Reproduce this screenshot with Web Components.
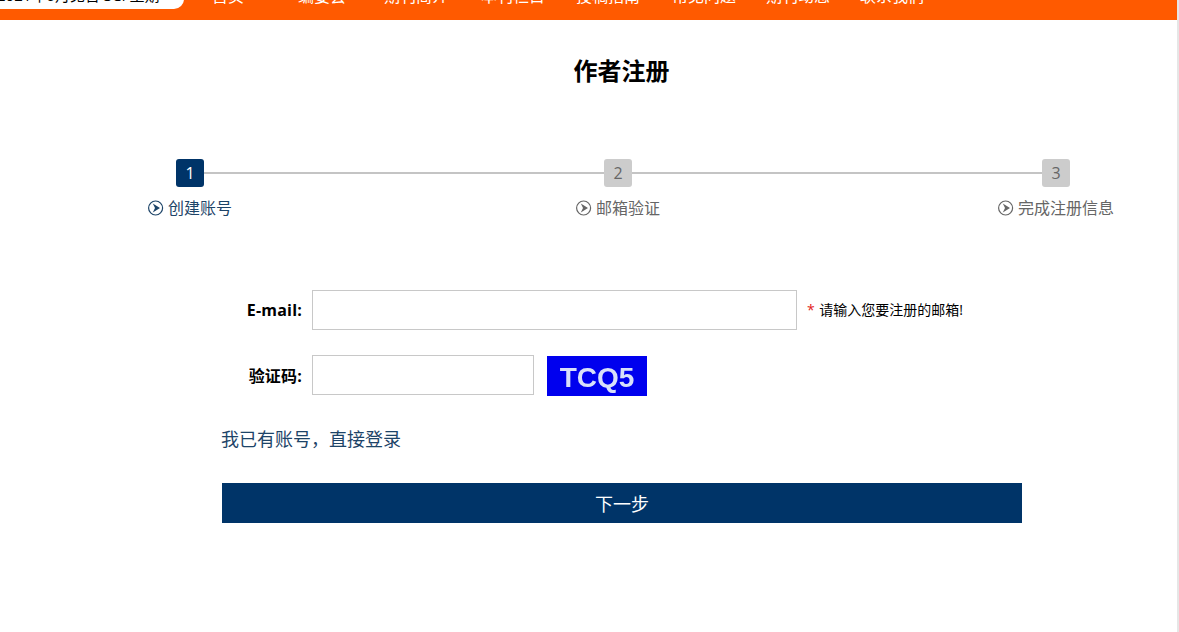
<!DOCTYPE html>
<html>
<head>
<meta charset="utf-8">
<style>
  html, body {
    margin: 0;
    height: 632px;
    overflow: hidden;
    background: #fff;
    font-family: "Open Sans", "Noto Sans CJK SC", sans-serif;
  }
  body { border-right: 2px solid #e6e6e6; box-sizing: border-box; }
</style>
</head>
<body>
<site-header>
  <nav-link>首页</nav-link>
  <nav-link style="margin-left:54px">编委会</nav-link>
  <nav-link style="margin-left:38px">期刊简介</nav-link>
  <nav-link style="margin-left:33px">本刊栏目</nav-link>
  <nav-link style="margin-left:31px">投稿指南</nav-link>
  <nav-link style="margin-left:32px">常见问题</nav-link>
  <nav-link style="margin-left:30px">期刊动态</nav-link>
  <nav-link style="margin-left:30px">联系我们</nav-link>
</site-header>
<register-page></register-page>

<script>
const arrowIcon = `
  <svg width="16" height="16" viewBox="0 0 16 16" aria-hidden="true">
    <circle cx="7.6" cy="8" r="7" fill="none" stroke="currentColor" stroke-width="1.2"/>
    <path d="M4.8 3.6 12 8l-7.2 4.4L7 8z" fill="currentColor"/>
  </svg>`;

class SiteHeader extends HTMLElement {
  constructor() {
    super();
    this.attachShadow({ mode: 'open' }).innerHTML = `
      <style>
        :host {
          display: flex;
          align-items: flex-end;
          height: 20px;
          background: #ff5a00;
          overflow: hidden;
        }
        .search {
          flex: none;
          width: 184px;
          height: 30px;
          margin-bottom: 11px;
          background: #fff;
          border-radius: 0 0 10px 0;
          color: #000;
          font-size: 15px;
          line-height: 33px;
          white-space: nowrap;
          overflow: hidden;
          text-indent: -3px;
        }
        .links {
          display: flex;
          margin-left: 28px;
          margin-bottom: 14px;
        }
      </style>
      <div class="search">2021年6月见台 SCI 主期</div>
      <div class="links"><slot></slot></div>
    `;
  }
}

class NavLink extends HTMLElement {
  constructor() {
    super();
    this.attachShadow({ mode: 'open' }).innerHTML = `
      <style>
        :host {
          display: block;
          color: #fff;
          font-size: 16px;
          line-height: 20px;
          white-space: nowrap;
        }
      </style>
      <slot></slot>
    `;
  }
}

class StepItem extends HTMLElement {
  constructor() {
    super();
    const active = this.hasAttribute('active');
    this.attachShadow({ mode: 'open' }).innerHTML = `
      <style>
        :host { display: block; }
        .num {
          width: 28px;
          height: 28px;
          margin-left: ${this.getAttribute('offset')}px;
          border-radius: 3px;
          background: ${active ? '#003468' : '#cccccc'};
          color: ${active ? '#fff' : '#666'};
          font-size: 16px;
          line-height: 28px;
          text-align: center;
        }
        .label {
          display: flex;
          align-items: center;
          gap: 4px;
          margin-top: 10px;
          color: ${active ? '#1d4468' : '#666'};
          font-size: 16px;
          line-height: 22px;
          white-space: nowrap;
        }
        svg { flex: none; }
      </style>
      <div class="num">${this.getAttribute('num')}</div>
      <div class="label">${arrowIcon}<slot></slot></div>
    `;
  }
}

class FormRow extends HTMLElement {
  constructor() {
    super();
    this.attachShadow({ mode: 'open' }).innerHTML = `
      <style>
        :host {
          display: flex;
          align-items: center;
          height: 40px;
          color: #000;
          font-size: 16px;
        }
        label {
          width: 302px;
          text-align: right;
          font-weight: 700;
          letter-spacing: .2px;
          margin-right: 10px;
          white-space: nowrap;
        }
      </style>
      <label>${this.getAttribute('label')}</label>
      <slot></slot>
    `;
  }
}

class CaptchaImage extends HTMLElement {
  constructor() {
    super();
    this.attachShadow({ mode: 'open' }).innerHTML = `
      <style>
        :host {
          display: block;
          width: 100px;
          height: 40px;
          margin: 1px 0 0 13px;
          background: #0000ee;
          color: #d8dffa;
          font: 700 28px/44px "Liberation Sans", sans-serif;
          text-align: center;
          overflow: hidden;
        }
        span { display: block; filter: blur(.7px); }
      </style>
      <span><slot></slot></span>
    `;
  }
}

class RegisterPage extends HTMLElement {
  constructor() {
    super();
    this.attachShadow({ mode: 'open' }).innerHTML = `
      <style>
        :host { display: block; }
        h1 {
          margin: 36px 0 0;
          padding-left: 66px;
          text-align: center;
          color: #000;
          font-size: 24px;
          line-height: 30px;
          font-weight: 700;
        }
        .steps {
          position: relative;
          display: flex;
          margin-top: 73px;
          height: 62px;
        }
        .track {
          position: absolute;
          left: 204px;
          width: 838px;
          top: 13px;
          height: 2px;
          background: #c4c4c4;
        }
        .s1 { position: absolute; left: 148px; }
        .s2 { position: absolute; left: 576px; }
        .s3 { position: absolute; left: 998px; }
        .form { margin-top: 69px; }
        input {
          box-sizing: border-box;
          height: 40px;
          border: 1px solid #c8c8c8;
          padding: 0 8px;
          outline: none;
          background: #fff;
        }
        .email { width: 485px; }
        .code { width: 222px; }
        .hint {
          margin: 0 0 3px 10px;
          font-size: 14px;
          white-space: nowrap;
        }
        .hint b { color: #e2231a; font-weight: 400; margin-right: 1px; }
        form-row + form-row { margin-top: 25px; }
        .login {
          display: block;
          margin: 24px 0 0 221px;
          color: #1d4468;
          font-size: 18px;
          line-height: 40px;
          text-decoration: none;
        }
        button {
          display: block;
          width: 800px;
          height: 40px;
          margin: 24px 0 0 222px;
          border: 0;
          background: #003468;
          color: #fff;
          font: inherit;
          font-size: 18px;
        }
      </style>
      <h1>作者注册</h1>
      <div class="steps">
        <div class="track"></div>
        <step-item class="s1" num="1" offset="28" active>创建账号</step-item>
        <step-item class="s2" num="2" offset="28">邮箱验证</step-item>
        <step-item class="s3" num="3" offset="44">完成注册信息</step-item>
      </div>
      <div class="form">
        <form-row label="E-mail:">
          <input class="email" type="text">
          <span class="hint"><b>*</b> 请输入您要注册的邮箱!</span>
        </form-row>
        <form-row label="验证码:">
          <input class="code" type="text">
          <captcha-image>TCQ5</captcha-image>
        </form-row>
      </div>
      <a class="login" href="#">我已有账号，直接登录</a>
      <button type="button">下一步</button>
    `;
  }
}

customElements.define('site-header', SiteHeader);
customElements.define('nav-link', NavLink);
customElements.define('step-item', StepItem);
customElements.define('form-row', FormRow);
customElements.define('captcha-image', CaptchaImage);
customElements.define('register-page', RegisterPage);
</script>
</body>
</html>
